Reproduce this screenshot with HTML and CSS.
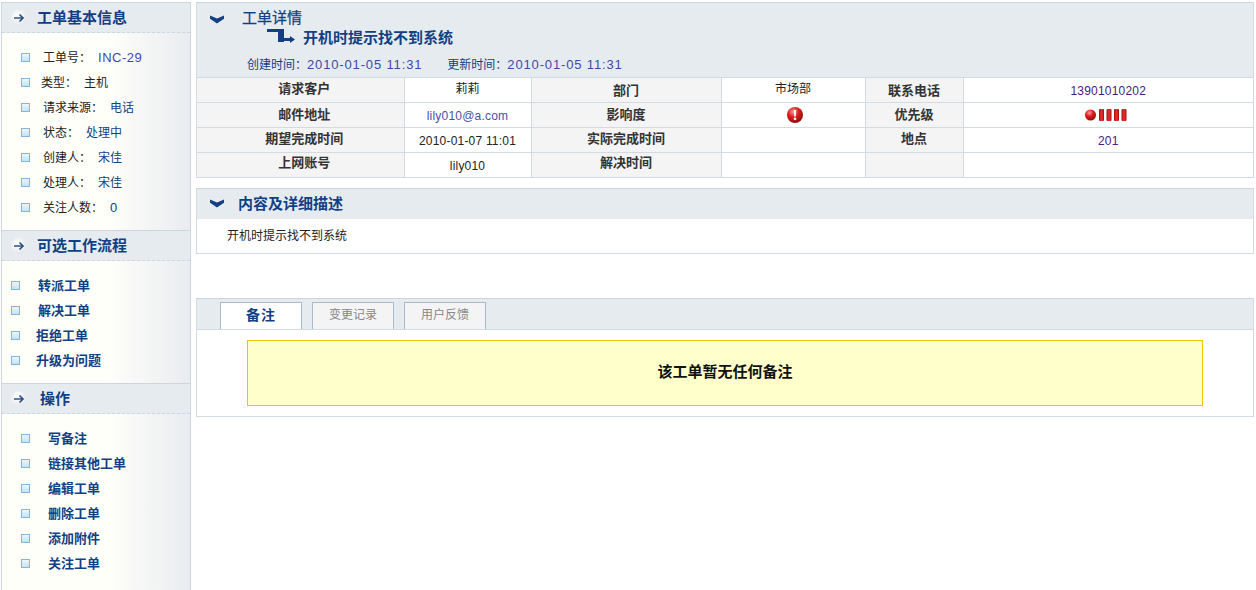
FILE: index.html
```html
<!DOCTYPE html>
<html lang="zh-CN">
<head>
<meta charset="utf-8">
<title>工单详情</title>
<link rel="stylesheet" href="styles.css">
</head>
<body>
<svg class="defs" width="0" height="0" aria-hidden="true">
  <defs>
    <radialGradient id="ball" cx="40%" cy="30%" r="75%"><stop offset="0" stop-color="#ff9a9a"/><stop offset=".45" stop-color="#dc1c1c"/><stop offset="1" stop-color="#8c0808"/></radialGradient>
    <linearGradient id="bar" x1="0" x2="1" y1="0" y2="0"><stop offset="0" stop-color="#a80d0d"/><stop offset=".5" stop-color="#e83030"/><stop offset="1" stop-color="#a80d0d"/></linearGradient>
    <radialGradient id="pearl" cx="40%" cy="35%" r="70%"><stop offset="0" stop-color="#ffffff"/><stop offset="1" stop-color="#e3e5e9"/></radialGradient>
    <symbol id="go" viewBox="0 0 16 16"><circle cx="8" cy="8" r="8" fill="url(#pearl)"/><path d="M3 8h9M8.500 4.500 12 8l-3.500 3.500" fill="none" stroke="#2f5382" stroke-width="1.700"/></symbol>
    <symbol id="chev" viewBox="0 0 16 9"><path d="M1 .5 8 3.500 15 .5v3.200L8 8.500 1 3.700z" fill="#123f85"/></symbol>
  </defs>
</svg>
<div class="page">
  <aside class="sidebar">
    <section class="side">
      <h3 class="side-head"><svg class="go"><use href="#go"/></svg><span class="t1">工单基本信息</span></h3>
      <ul class="side-list info">
        <li><i class="box"></i><span class="in7">工单号：</span><a class="link violet">INC-29</a></li>
        <li><i class="box"></i><span class="in5">类型：</span><span>主机</span></li>
        <li><i class="box"></i><span class="in7">请求来源：</span><a class="link">电话</a></li>
        <li><i class="box"></i><span class="in7">状态：</span><a class="link">处理中</a></li>
        <li><i class="box"></i><span class="in7">创建人：</span><a class="link">宋佳</a></li>
        <li><i class="box"></i><span class="in7">处理人：</span><a class="link">宋佳</a></li>
        <li><i class="box"></i><span class="in7">关注人数：</span><a class="link zero">0</a></li>
      </ul>
    </section>
    <section class="side">
      <h3 class="side-head"><svg class="go"><use href="#go"/></svg><span class="t1">可选工作流程</span></h3>
      <ul class="side-list flow">
        <li><i class="box"></i><b class="a1">转派工单</b></li>
        <li><i class="box"></i><b class="a1">解决工单</b></li>
        <li><i class="box"></i><b class="a2">拒绝工单</b></li>
        <li><i class="box"></i><b class="a2">升级为问题</b></li>
      </ul>
    </section>
    <section class="side last">
      <h3 class="side-head"><svg class="go"><use href="#go"/></svg><span class="t3">操作</span></h3>
      <ul class="side-list ops">
        <li><i class="box"></i><b>写备注</b></li>
        <li><i class="box"></i><b>链接其他工单</b></li>
        <li><i class="box"></i><b>编辑工单</b></li>
        <li><i class="box"></i><b>删除工单</b></li>
        <li><i class="box"></i><b>添加附件</b></li>
        <li><i class="box"></i><b>关注工单</b></li>
      </ul>
    </section>
  </aside>
  <main class="main">
    <section class="panel">
      <header class="detail-head">
        <div class="dh-row"><svg class="chev chev-low"><use href="#chev"/></svg><h2 class="dh-title">工单详情</h2></div>
        <div class="dh-sub">
          <svg class="sub-arrow" viewBox="0 0 28 14"><path d="M0 0h17v13h-6V3H0zM17 9h6V7l5 3.500L23 14v-2h-6z" fill="#123f85"/></svg>
          <span>开机时提示找不到系统</span>
        </div>
        <div class="dh-meta"><span class="m-label">创建时间：</span><span class="m-val">2010-01-05 11:31</span><span class="m-label m-gap">更新时间：</span><span class="m-val">2010-01-05 11:31</span></div>
      </header>
      <table class="grid">
        <colgroup><col class="c1"><col class="c2"><col class="c3"><col class="c4"><col class="c5"><col class="c6"></colgroup>
        <tr><th class="first">请求客户</th><td>莉莉</td><th class="low2">部门</th><td>市场部</td><th class="low2">联系电话</th><td class="num purple">13901010202</td></tr>
        <tr><th class="first low1">邮件地址</th><td class="num blue">lily010@a.com</td><th class="low1">影响度</th><td class="impact-cell"><svg class="impact" viewBox="0 0 16 16"><circle cx="8" cy="8" r="8" fill="url(#ball)"/><path d="M6.800 3h2.400l-.4 6.500H7.200z" fill="#fff"/><circle cx="8" cy="11.800" r="1.400" fill="#fff"/></svg></td><th class="low1">优先级</th><td class="prio-cell"><svg class="prio" viewBox="0 0 43 12"><circle cx="5.500" cy="6" r="5.500" fill="url(#ball)"/><rect x="14" y="0" width="5" height="12" rx="1" fill="url(#bar)"/><rect x="21.500" y="0" width="5" height="12" rx="1" fill="url(#bar)"/><rect x="29" y="0" width="5" height="12" rx="1" fill="url(#bar)"/><rect x="36.500" y="0" width="5" height="12" rx="1" fill="url(#bar)"/></svg></td></tr>
        <tr><th class="first">期望完成时间</th><td class="num">2010-01-07 11:01</td><th>实际完成时间</th><td></td><th>地点</th><td class="num purple">201</td></tr>
        <tr class="end"><th class="first">上网账号</th><td class="num">lily010</td><th>解决时间</th><td></td><th></th><td></td></tr>
      </table>
    </section>
    <section class="panel desc">
      <header class="desc-head"><svg class="chev"><use href="#chev"/></svg><h2 class="desc-title">内容及详细描述</h2></header>
      <p class="desc-body">开机时提示找不到系统</p>
    </section>
    <section class="panel tabs-panel">
      <nav class="tabs">
        <a class="tab on">备注</a>
        <a class="tab">变更记录</a>
        <a class="tab">用户反馈</a>
      </nav>
      <div class="tab-body"><div class="notice">该工单暂无任何备注</div></div>
    </section>
  </main>
</div>
</body>
</html>
```
FILE: styles.css
```css
* { box-sizing: border-box; }
html, body { margin: 0; padding: 0; height: 590px; overflow: hidden; background: #fff; }
body { font: 12px/1 "Liberation Sans", "Noto Sans CJK SC", sans-serif; color: #222; }
.defs { position: absolute; }
ul, h2, h3, p { margin: 0; padding: 0; }
ul { list-style: none; }
a { text-decoration: none; }

.page { display: flex; height: 590px; align-items: flex-start; }
.sidebar { flex: none; width: 190px; height: 590px; margin: 2px 0 0 1px; border: 1px solid #cdd5de; border-bottom: 0; display: flex; flex-direction: column; }
.side { background: linear-gradient(90deg, #fffffa 0%, #fffffa 55%, #e9ecf0 100%); }
.side-head { height: 30px; background: #e6ebf0; border-bottom: 1px dashed #cdd5e0; display: flex; align-items: center; font-size: 15px; font-weight: 700; color: #123f85; }
.side + .side .side-head { height: 31px; border-top: 1px solid #cdd5de; }
.go { width: 16px; height: 16px; margin-left: 9px; flex: none; }
.t1 { margin-left: 10px; }
.t3 { margin-left: 13px; }
.side-list li { height: 25px; display: flex; align-items: center; }
.box { width: 9px; height: 9px; flex: none; border: 1px solid #85b5dc; background: linear-gradient(#edf7fc, #bfe4f7); }
.info { padding: 12px 0; height: 197px; }
.info .box, .ops .box { margin-left: 19px; }
.in7 { margin-left: 13px; }
.in5 { margin-left: 11px; }
.in7 + *, .in5 + * { margin-left: 7px; }
.link { color: #123f85; }
.violet { color: #3c4aa6; font-size: 13px; letter-spacing: .5px; }
.zero { font-size: 13px; }
.flow { padding: 12px 0 10px; height: 122px; }
.flow .box { margin-left: 9px; }
b { color: #123f85; font-size: 13px; font-weight: 700; }
.a1 { margin-left: 18px; }
.a2 { margin-left: 16px; }
.last { flex: 1; }
.ops { padding-top: 12px; }
.ops b { margin-left: 18px; }

.main { flex: none; width: 1058px; margin-left: 5px; padding-top: 2px; display: flex; flex-direction: column; }
.panel { border: 1px solid #d3dae3; border-top-color: #ccd5df; }
.detail-head { height: 74px; background: #e6ebf0; color: #123f85; }
.dh-row { display: flex; align-items: center; height: 28px; }
.chev { width: 16px; height: 9px; flex: none; margin-left: 12px; }
.chev-low { margin-top: 4px; }
.dh-title { font-size: 15px; font-weight: 400; margin-left: 17px; -webkit-text-stroke: .25px #123f85; }
.dh-sub { display: flex; align-items: center; height: 16px; margin-top: -2px; padding-left: 70px; font-size: 15px; font-weight: 700; }
.sub-arrow { width: 28px; height: 14px; margin-right: 8px; margin-top: -3px; }
.dh-meta { margin: 12px 0 0 50px; line-height: 16px; }
.m-label { color: #123f85; }
.m-gap { margin-left: 25px; }
.m-val { color: #3c4aa6; font-size: 13px; letter-spacing: .85px; }

.grid { width: 100%; table-layout: fixed; border-collapse: collapse; }
.grid th, .grid td { height: 25px; border: 1px solid #d3dae3; text-align: center; padding: 0 0 2px; font-size: 12px; }
.grid th:first-child { border-left: 0; }
.grid td:last-child { border-right: 0; }
.grid .end th, .grid .end td { height: 24px; border-bottom: 0; }
.grid th { background: #f4f4f4; color: #333; font-size: 13px; font-weight: 700; padding-bottom: 4px; }
.grid td { color: #222; background: #fff; }
.grid .low1 { padding: 0 0 2px; }
.grid .low2 { padding: 1px 0 0; }
.grid .first { padding-left: 8px; }
.c1 { width: 207px; }
.c2 { width: 127px; }
.c3 { width: 190px; }
.c4 { width: 144px; }
.c5 { width: 98px; }
.grid .num { padding: 2px 0 0; letter-spacing: .2px; }
.grid .purple { color: #4a1a80; }
.grid .blue { color: #4a50a8; }
.grid .impact-cell { padding-left: 3px; }
.grid .prio-cell { padding-right: 3px; }
.impact { width: 16px; height: 16px; display: block; margin: 2px auto 0; }
.prio { width: 43px; height: 12px; display: block; margin: 2px auto 0; }

.desc { margin-top: 10px; height: 66px; }
.desc-head { height: 30px; background: #e6ebf0; display: flex; align-items: center; }
.desc-title { font-size: 15px; font-weight: 700; color: #123f85; margin-left: 13px; }
.desc-body { padding: 11px 0 0 30px; line-height: 12px; }

.tabs-panel { margin-top: 44px; height: 119px; }
.tabs { height: 31px; background: #e6ebf0; border-bottom: 1px solid #d3dae3; padding: 3px 0 0 23px; display: flex; gap: 10px; align-items: flex-start; }
.tab { width: 82px; height: 27px; padding-bottom: 2px; border: 1px solid #a8bacb; border-bottom: 0; background: #f4f4f4; color: #888; display: flex; align-items: center; justify-content: center; }
.tab.on { background: #fff; color: #123f85; font-size: 14px; font-weight: 700; letter-spacing: 1px; }
.tab-body { padding: 10px 50px 0; }
.notice { width: 956px; height: 66px; padding-bottom: 2px; background: #ffffcc; border: 1px solid #f2c200; display: flex; align-items: center; justify-content: center; font-size: 15px; font-weight: 700; color: #111; }
```
